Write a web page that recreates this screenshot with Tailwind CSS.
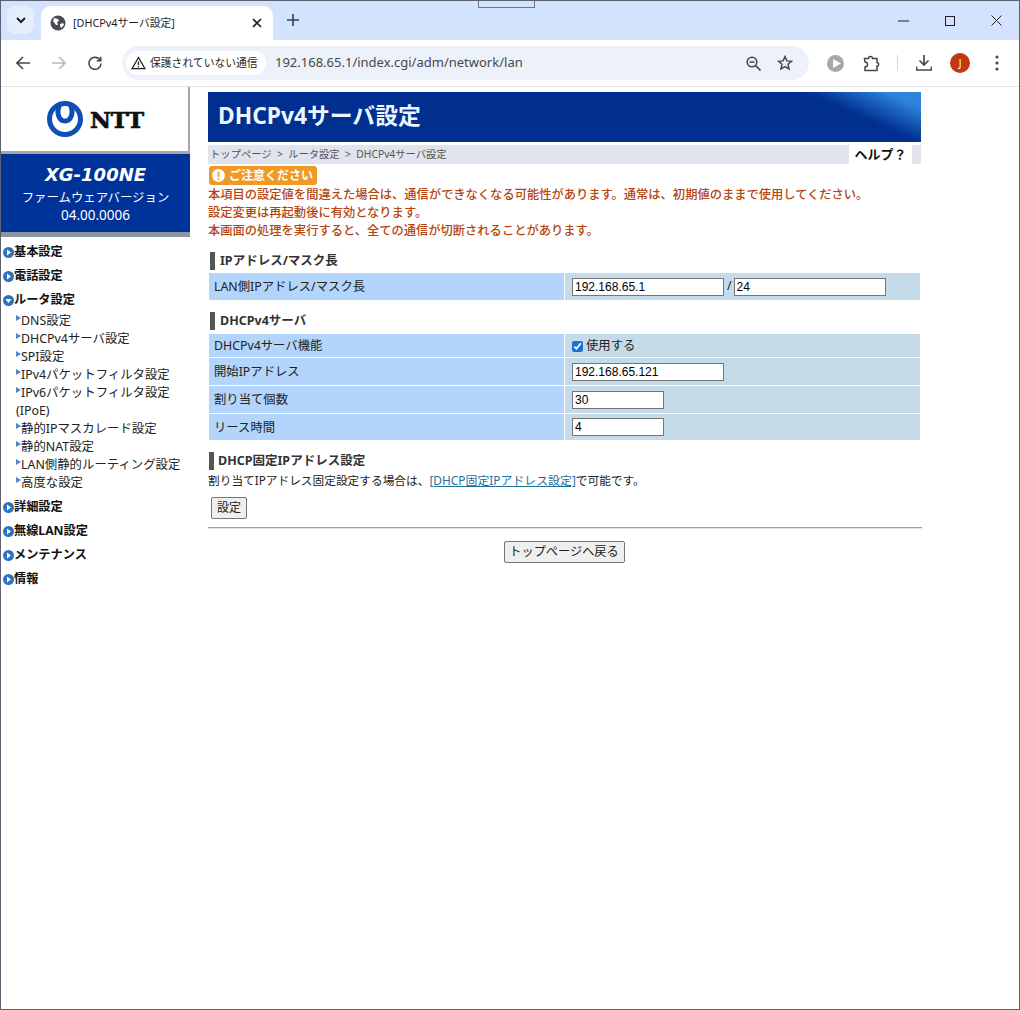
<!DOCTYPE html>
<html lang="ja">
<head>
  <meta charset="UTF-8" />
  <title>[DHCPv4サーバ設定]</title>
  <script src="https://cdn.jsdelivr.net/npm/@tailwindcss/browser@4"></script>
</head>
<body class="bg-white h-[1010px] w-[1020px] overflow-hidden relative border-l border-t border-r border-b border-[#5c6270] font-['Noto_Sans','Noto_Sans_CJK_JP',sans-serif] text-[#222]">

  <!-- window edge thing at the top -->
  <div class="absolute left-[477px] top-0 w-[57px] h-[7px] border border-t-0 border-[#777] z-10"></div>

  <!-- tab strip -->
  <div class="h-[39px] bg-[#d3e3fd] flex items-end relative">
    <button class="ml-[6px] mb-[6px] w-[27px] h-[28px] rounded-lg bg-[#e4edfc] flex items-center justify-center">
      <svg width="10" height="7" viewBox="0 0 10 7" fill="none" stroke="#1f1f1f" stroke-width="2"><path d="M1 1l4 4 4-4"/></svg>
    </button>
    <div class="ml-[7px] w-[232px] h-[34px] bg-white rounded-t-[10px] flex items-center pl-[9px] pr-[11px]">
      <svg width="16" height="16" viewBox="0 0 16 16" class="shrink-0"><circle cx="8" cy="8" r="7.5" fill="#474a50"/><path d="M4 3l4 1 1 2-2 1 1 3-2 0-3-4zM10 9l3-1 1 2-3 3-1-2z" fill="#fff"/></svg>
      <span class="ml-[7px] text-[10.8px] text-[#1f1f1f] flex-1">[DHCPv4サーバ設定]</span>
      <svg width="10" height="10" viewBox="0 0 10 10" stroke="#1f1f1f" stroke-width="1.6"><path d="M1 1l8 8M9 1l-8 8"/></svg>
    </div>
    <svg width="12" height="12" viewBox="0 0 12 12" stroke="#3c4043" stroke-width="1.6" class="ml-[14px] mb-[14px]"><path d="M6 0v12M0 6h12"/></svg>
    <div class="ml-auto flex items-center mb-[14px] pr-[17px] gap-[36px]">
      <svg width="11" height="10" viewBox="0 0 11 10" stroke="#1f1f1f" stroke-width="1"><path d="M0 5h11"/></svg>
      <svg width="10" height="10" viewBox="0 0 10 10" stroke="#1f1f1f" stroke-width="1" fill="none"><rect x=".5" y=".5" width="9" height="9"/></svg>
      <svg width="11" height="11" viewBox="0 0 11 11" stroke="#1f1f1f" stroke-width="1"><path d="M.5.5l10 10M10.5.5l-10 10"/></svg>
    </div>
  </div>

  <!-- toolbar -->
  <div class="h-[47px] bg-white rounded-t-[8px] border-b border-[#e3e3e3] flex items-center relative">
    <svg width="14" height="14" viewBox="0 0 14 14" fill="none" stroke="#474747" stroke-width="1.6" class="ml-[15px]"><path d="M14 7H1.5M7 1L1 7l6 6"/></svg>
    <svg width="14" height="14" viewBox="0 0 14 14" fill="none" stroke="#b6b8bb" stroke-width="1.6" class="ml-[22px]"><path d="M0 7h12.5M7 1l6 6-6 6"/></svg>
    <svg width="14" height="14" viewBox="0 0 14 14" fill="none" stroke="#474747" stroke-width="1.6" class="ml-[22px]"><path d="M12.3 4.5A6 6 0 1 0 13 7.5M12.7 .8v4h-4"/></svg>
    <div class="ml-[20px] w-[687px] h-[34px] rounded-full bg-[#edf2fa] flex items-center pl-[4px] pr-[16px]">
      <div class="h-[24px] w-[140px] rounded-full bg-white flex items-center pl-[5px]">
        <svg width="15" height="14" viewBox="0 0 15 14" fill="none" stroke="#1f1f1f" stroke-width="1.3"><path d="M7.5 1.5L14 12.7H1zM7.5 5.5v3.6M7.5 10v1.2"/></svg>
        <span class="ml-[4px] text-[10.8px] whitespace-nowrap text-[#1f1f1f]">保護されていない通信</span>
      </div>
      <span class="ml-[9px] text-[13px] text-[#474747] flex-1">192.168.65.1/index.cgi/adm/network/lan</span>
      <svg width="15" height="15" viewBox="0 0 15 15" fill="none" stroke="#474747" stroke-width="1.6"><circle cx="6" cy="6" r="4.8"/><path d="M9.5 9.5L14.5 14.5M3.5 6h5"/></svg>
      <svg width="16" height="16" viewBox="0 0 16 16" fill="none" stroke="#474747" stroke-width="1.5" class="ml-[16px]"><path d="M8 1.6l1.9 4.3 4.6.4-3.5 3 1.1 4.6L8 11.5l-4.1 2.4L5 9.3l-3.5-3 4.6-.4z"/></svg>
    </div>
    <svg width="17" height="17" viewBox="0 0 17 17" class="ml-[18px]"><circle cx="8.5" cy="8.5" r="8.5" fill="#a8a8a8"/><path d="M6 4l8 4.5-8 4.5z" fill="#fff"/></svg>
    <svg width="17" height="17" viewBox="0 0 17 17" fill="none" stroke="#474747" stroke-width="1.5" class="ml-[19px]"><path d="M1.5 3.5h4a2 2 0 0 1 4 0h4.500v4a2 2 0 0 1 1 3.500h-1v4.500h-12v-3.500a2.500 2.500 0 0 0 0-5z"/></svg>
    <div class="ml-[17px] w-px h-[16px] bg-[#d5d7da]"></div>
    <svg width="16" height="16" viewBox="0 0 16 16" fill="none" stroke="#474747" stroke-width="1.7" class="ml-[18px]"><path d="M8 0v10M3.500 5.500L8 10l4.500-4.500M.5 11.500v3.500h15v-3.500"/></svg>
    <div class="ml-[18px] w-[20px] h-[20px] rounded-full bg-[#c0390f] text-white text-[10px] flex items-center justify-center">J</div>
    <svg width="4" height="16" viewBox="0 0 4 16" fill="#474747" class="ml-[25px]"><circle cx="2" cy="2" r="1.6"/><circle cx="2" cy="8" r="1.6"/><circle cx="2" cy="14" r="1.6"/></svg>
  </div>

  <div class="flex items-start">
    <!-- left menu -->
    <aside class="w-[189px] shrink-0">
      <div class="h-[67px] border-r-2 border-b-[3px] border-[#a6a6a6] flex items-center pl-[45px]">
        <svg width="38" height="38" viewBox="0 0 38 38" fill="none"><circle cx="19" cy="19" r="15.500" stroke="#0e4fb5" stroke-width="5"/><path d="M13.500 5C10 13 13 21 19 21S28 13 24.500 5" stroke="#0e4fb5" stroke-width="5"/></svg>
        <span class="ml-[6px] font-['DejaVu_Serif',serif] font-black text-[23px] leading-none tracking-[-.2px] text-[#111] [-webkit-text-stroke:0.7px_#111]">NTT</span>
      </div>
      <div class="h-[83px] bg-[#003399] border-b-[5px] border-[#8c94a3] text-center text-white pt-[8px]">
        <div class="font-['DejaVu_Sans',sans-serif] font-bold italic text-[18px] leading-[26px]">XG-100NE</div>
        <div class="text-[12.4px] leading-[18px] mt-[1px]">ファームウェアバージョン</div>
        <div class="text-[13.500px] leading-[16px]">04.00.0006</div>
      </div>
      <nav class="mt-[3px] text-[12.200px] text-[#111]">
        <a class="flex items-center h-[24px] font-bold"><svg width="11" height="11" viewBox="0 0 11 11" class="ml-[2px]"><circle cx="5.500" cy="5.500" r="5.500" fill="#2a72c0"/><path d="M4 2.500l4 3-4 3z" fill="#fff"/></svg>基本設定</a>
        <a class="flex items-center h-[24px] font-bold"><svg width="11" height="11" viewBox="0 0 11 11" class="ml-[2px]"><circle cx="5.500" cy="5.500" r="5.500" fill="#2a72c0"/><path d="M4 2.500l4 3-4 3z" fill="#fff"/></svg>電話設定</a>
        <a class="flex items-center h-[24px] font-bold"><svg width="11" height="11" viewBox="0 0 11 11" class="ml-[2px]"><circle cx="5.500" cy="5.500" r="5.500" fill="#2a72c0"/><path d="M2.500 4l3 4 3-4z" fill="#fff"/></svg>ルータ設定</a>
        <div class="pl-[15px] text-[12.400px] font-normal leading-[18px] text-[#222] pb-[3px]">
          <a class="block"><span class="inline-block w-[5px] h-[6px] bg-[#4f86c6] [clip-path:polygon(0_0,100%_50%,0_100%)] mb-[4px]"></span>DNS設定</a>
          <a class="block"><span class="inline-block w-[5px] h-[6px] bg-[#4f86c6] [clip-path:polygon(0_0,100%_50%,0_100%)] mb-[4px]"></span>DHCPv4サーバ設定</a>
          <a class="block"><span class="inline-block w-[5px] h-[6px] bg-[#4f86c6] [clip-path:polygon(0_0,100%_50%,0_100%)] mb-[4px]"></span>SPI設定</a>
          <a class="block"><span class="inline-block w-[5px] h-[6px] bg-[#4f86c6] [clip-path:polygon(0_0,100%_50%,0_100%)] mb-[4px]"></span>IPv4パケットフィルタ設定</a>
          <a class="block"><span class="inline-block w-[5px] h-[6px] bg-[#4f86c6] [clip-path:polygon(0_0,100%_50%,0_100%)] mb-[4px]"></span>IPv6パケットフィルタ設定<br />(IPoE)</a>
          <a class="block"><span class="inline-block w-[5px] h-[6px] bg-[#4f86c6] [clip-path:polygon(0_0,100%_50%,0_100%)] mb-[4px]"></span>静的IPマスカレード設定</a>
          <a class="block"><span class="inline-block w-[5px] h-[6px] bg-[#4f86c6] [clip-path:polygon(0_0,100%_50%,0_100%)] mb-[4px]"></span>静的NAT設定</a>
          <a class="block"><span class="inline-block w-[5px] h-[6px] bg-[#4f86c6] [clip-path:polygon(0_0,100%_50%,0_100%)] mb-[4px]"></span>LAN側静的ルーティング設定</a>
          <a class="block"><span class="inline-block w-[5px] h-[6px] bg-[#4f86c6] [clip-path:polygon(0_0,100%_50%,0_100%)] mb-[4px]"></span>高度な設定</a>
        </div>
        <a class="flex items-center h-[24px] font-bold"><svg width="11" height="11" viewBox="0 0 11 11" class="ml-[2px]"><circle cx="5.500" cy="5.500" r="5.500" fill="#2a72c0"/><path d="M4 2.500l4 3-4 3z" fill="#fff"/></svg>詳細設定</a>
        <a class="flex items-center h-[24px] font-bold"><svg width="11" height="11" viewBox="0 0 11 11" class="ml-[2px]"><circle cx="5.500" cy="5.500" r="5.500" fill="#2a72c0"/><path d="M4 2.500l4 3-4 3z" fill="#fff"/></svg>無線LAN設定</a>
        <a class="flex items-center h-[24px] font-bold"><svg width="11" height="11" viewBox="0 0 11 11" class="ml-[2px]"><circle cx="5.500" cy="5.500" r="5.500" fill="#2a72c0"/><path d="M4 2.500l4 3-4 3z" fill="#fff"/></svg>メンテナンス</a>
        <a class="flex items-center h-[24px] font-bold"><svg width="11" height="11" viewBox="0 0 11 11" class="ml-[2px]"><circle cx="5.500" cy="5.500" r="5.500" fill="#2a72c0"/><path d="M4 2.500l4 3-4 3z" fill="#fff"/></svg>情報</a>
      </nav>
    </aside>

    <!-- main -->
    <main class="ml-[18px] w-[714px] pt-[5px] text-[12.350px]">
      <h1 class="h-[50px] w-[713px] pl-[10px] pb-[2px] flex items-center text-[22.800px] font-bold text-[#eaf6ff] bg-[linear-gradient(24deg,#002f8f_86%,#2f85dc_96%)]">DHCPv4サーバ設定</h1>

      <div class="mt-[3px] h-[19px] w-[713px] bg-[#e1e4ec] flex items-center text-[10.300px] text-[#555] pl-[2px] relative">
        <span>トップページ &nbsp;&gt;&nbsp; ルータ設定 &nbsp;&gt;&nbsp; DHCPv4サーバ設定</span>
        <span class="absolute right-[9px] top-0 w-[63px] h-[19px] bg-white flex items-center justify-center text-[13px] font-bold text-[#111]">ヘルプ？</span>
      </div>

      <div class="mt-[2px] ml-px w-[108px] h-[19px] rounded-[3px] bg-[#f09a25] flex items-center pl-[3px] text-white text-[12px] font-bold">
        <span class="w-[13px] h-[13px] rounded-full bg-white text-[#f09a25] text-[11px] leading-[13px] text-center mr-[4px]">!</span>ご注意ください
      </div>
      <div class="text-[#b5440f] font-medium leading-[18px] text-[12.280px] mt-px">
        <p>本項目の設定値を間違えた場合は、通信ができなくなる可能性があります。通常は、初期値のままで使用してください。</p>
        <p>設定変更は再起動後に有効となります。</p>
        <p>本画面の処理を実行すると、全ての通信が切断されることがあります。</p>
      </div>

      <h2 class="mt-[12px] ml-[2px] h-[18px] border-l-[5px] border-[#555] pl-[5px] flex items-center font-bold text-[12.500px] text-[#333]">IPアドレス/マスク長</h2>
      <div class="mt-[3px] ml-px w-[711px] grid grid-cols-[355px_1fr] gap-x-px">
        <div class="h-[27px] bg-[#b3d4fb] pl-[5px] pt-[2px] flex items-center">LAN側IPアドレス/マスク長</div>
        <div class="h-[27px] bg-[#c5dbe9] pl-[7px] flex items-center">
          <input value="192.168.65.1" class="w-[152px] h-[18px] bg-white border border-[#767676] px-[2px] text-[12px] font-['Liberation_Sans',sans-serif] text-black" />
          <span class="ml-[3px] mr-[2px]">/</span>
          <input value="24" class="w-[152px] h-[18px] bg-white border border-[#767676] px-[2px] text-[12px] font-['Liberation_Sans',sans-serif] text-black" />
        </div>
      </div>

      <h2 class="mt-[12px] ml-[2px] h-[18px] border-l-[5px] border-[#555] pl-[5px] flex items-center font-bold text-[12.500px] text-[#333]">DHCPv4サーバ</h2>
      <div class="mt-[4px] ml-px w-[711px] grid grid-cols-[355px_1fr] gap-x-px gap-y-px">
        <div class="h-[23px] bg-[#b3d4fb] pl-[5px] pt-[2px] flex items-center">DHCPv4サーバ機能</div>
        <div class="h-[23px] bg-[#c5dbe9] pl-[7px] pt-[2px] flex items-center">
          <input type="checkbox" checked class="w-[11px] h-[11px] accent-[#1a6fd0]" />
          <span class="ml-[3px]">使用する</span>
        </div>
        <div class="h-[27px] bg-[#b3d4fb] pl-[5px] pt-[2px] flex items-center">開始IPアドレス</div>
        <div class="h-[27px] bg-[#c5dbe9] pl-[7px] flex items-center"><input value="192.168.65.121" class="w-[152px] h-[18px] bg-white border border-[#767676] px-[2px] text-[12px] font-['Liberation_Sans',sans-serif] text-black" /></div>
        <div class="h-[27px] bg-[#b3d4fb] pl-[5px] pt-[2px] flex items-center">割り当て個数</div>
        <div class="h-[27px] bg-[#c5dbe9] pl-[7px] flex items-center"><input value="30" class="w-[92px] h-[18px] bg-white border border-[#767676] px-[2px] text-[12px] font-['Liberation_Sans',sans-serif] text-black" /></div>
        <div class="h-[26px] bg-[#b3d4fb] pl-[5px] pt-[2px] flex items-center">リース時間</div>
        <div class="h-[26px] bg-[#c5dbe9] pl-[7px] flex items-center"><input value="4" class="w-[92px] h-[18px] bg-white border border-[#767676] px-[2px] text-[12px] font-['Liberation_Sans',sans-serif] text-black" /></div>
      </div>

      <h2 class="mt-[12px] ml-[1px] h-[18px] border-l-[5px] border-[#555] pl-[4px] flex items-center font-bold text-[12.500px] text-[#333]">DHCP固定IPアドレス設定</h2>
      <p class="leading-[20px] text-[11.700px]">割り当てIPアドレス固定設定する場合は、<a class="text-[#1f6f9c] underline text-[11.900px]">[DHCP固定IPアドレス設定]</a>で可能です。</p>

      <button class="mt-[7px] ml-[3px] h-[22px] w-[36px] bg-[#efefef] border border-[#767676] rounded-[2px] text-[12px] block">設定</button>

      <div class="mt-[8px] h-[2px] bg-[#a0a0a0] border-b border-[#e5e5e5]"></div>

      <div class="flex justify-center mt-[12px] pr-[2px]">
        <button class="h-[22px] w-[121px] bg-[#efefef] border border-[#767676] rounded-[2px] text-[12.200px]">トップページへ戻る</button>
      </div>
    </main>
  </div>
</body>
</html>
